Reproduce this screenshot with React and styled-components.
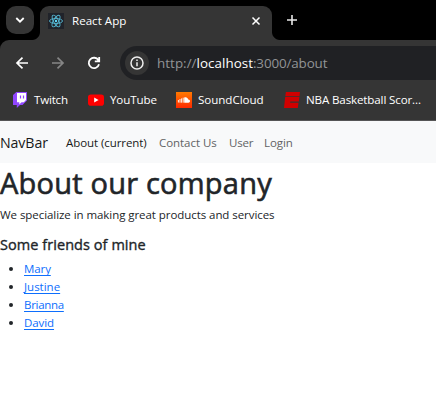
import React from "react";
import styled, { createGlobalStyle } from "styled-components";

const Global = createGlobalStyle`
  * { box-sizing: border-box; }
  body { margin: 0; background: #fff; overflow: hidden; font-family: "Open Sans", "Noto Sans", sans-serif; }
`;

const Window = styled.div`
  width: 436px;
  height: 411px;
  overflow: hidden;
  background: #fff;
  color: #212529;
`;

const Text = styled.span`
  white-space: nowrap;
  letter-spacing: ${(p) => p.$track || 0}px;
`;

const TabStrip = styled.div`
  display: flex;
  height: 40px;
  padding: 6px 0 0 6px;
  background: #000;
`;

const TabSearch = styled.div`
  display: grid;
  place-items: center;
  width: 28px;
  height: 28px;
  border-radius: 10px;
  background: #353535;
`;

const TabCurve = styled.div`
  width: 8px;
  height: 8px;
  align-self: flex-end;
  margin-left: ${(p) => (p.$right ? 0 : -2)}px;
  background: radial-gradient(circle at ${(p) => (p.$right ? "100%" : "0")} 0, transparent 7.5px, #353535 8.5px);
`;

const Tab = styled.div`
  display: flex;
  align-items: center;
  width: 232px;
  height: 34px;
  padding: 0 11px 5px 8px;
  border-radius: 9px 9px 0 0;
  background: #353535;
  color: #fff;
  font-size: 11.6px;
  line-height: 16px;
`;

const Favicon = styled.div`
  display: grid;
  width: 16px;
  height: 16px;
  margin-right: 8px;
  background: #20232a;
`;

const TabTitle = styled.div`
  flex: 1;
`;

const NewTab = styled.div`
  padding: 8px 0 0 6px;
  line-height: 0;
`;

const ToolbarBack = styled.div`
  background: #000;
`;

const Toolbar = styled.div`
  display: flex;
  align-items: center;
  height: 46px;
  padding-left: 14px;
  border-radius: 9px 0 0 0;
  background: #353535;
`;

const ToolButton = styled.div`
  display: grid;
  place-items: center;
  width: 16px;
  height: 16px;
  margin-right: 20px;

  &:nth-child(3) { margin-right: 18px; }
`;

const AddressBar = styled.div`
  display: flex;
  align-items: center;
  width: 340px;
  height: 34px;
  flex: none;
  padding-left: 5px;
  border-radius: 17px 0 0 17px;
  background: #202124;
`;

const SiteInfo = styled.div`
  display: grid;
  place-items: center;
  width: 24px;
  height: 24px;
  margin-right: 8px;
  border-radius: 50%;
  background: #353535;
`;

const Url = styled.div`
  display: flex;
  color: #929496;
  font-size: 13.4px;
  line-height: 20px;
  white-space: nowrap;
`;

const Host = styled(Text)`
  color: #fff;
`;

const Bookmarks = styled.div`
  display: flex;
  height: 35px;
  padding: 6px 0 0 12px;
  border-bottom: 1px solid #555;
  background: #353535;
  color: #fff;
`;

const Bookmark = styled.div`
  display: flex;
  align-items: center;
  flex: none;
  width: ${(p) => p.$width}px;
  height: 16px;
  font-size: 11.6px;
  line-height: 16px;

  svg { flex: none; margin-right: 6px; }
`;

const NavBar = styled.nav`
  display: flex;
  height: 42px;
  background: #f8f9fa;
  line-height: 20px;
`;

const Brand = styled.div`
  width: 66px;
  padding-top: 12px;
  color: #191919;
  font-size: 14.2px;
`;

const NavLink = styled.a`
  width: ${(p) => p.$width}px;
  padding-top: 12px;
  color: ${(p) => (p.$active ? "#191919" : "#626364")};
  font-size: 11.5px;
`;

const Title = styled.h1`
  height: 40px;
  margin: 0;
  font-size: 29px;
  font-weight: 400;
  line-height: 40px;
  -webkit-text-stroke: 0.6px currentColor;
`;

const Paragraph = styled.p`
  height: 18px;
  margin: 3px 0 12px;
  font-size: 11.5px;
  line-height: 18px;
`;

const Subtitle = styled.h5`
  height: 18px;
  margin: 0 0 6px;
  font-size: 14.5px;
  font-weight: 400;
  line-height: 18px;
  -webkit-text-stroke: 0.35px currentColor;
`;

const Friends = styled.ul`
  margin: 0;
  padding-left: 24px;
  font-size: 11.5px;
  line-height: 18px;
`;

const FriendLink = styled.a`
  color: #0d6efd;
  text-decoration: underline;
  text-decoration-thickness: 1px;
  text-underline-offset: 1.5px;
  text-decoration-skip-ink: none;
`;

const ReactIcon = () => (
  <svg width="16" height="16" viewBox="0 0 16 16" fill="none" stroke="#55b8d3" strokeWidth=".9">
    <circle cx="8" cy="8" r="1.2" fill="#61dafb" stroke="none" />
    {[0, 60, 120].map((a) => (
      <ellipse key={a} cx="8" cy="8" rx="6.5" ry="2.5" transform={`rotate(${a} 8 8)`} />
    ))}
  </svg>
);

const TwitchIcon = () => (
  <svg width="16" height="16" viewBox="0 0 16 16">
    <path d="M4.3 0 1 3v10h3.8v3L8 13h2.5L15 8.4V0z" fill="#9146ff" />
    <path d="M5 1h9v7l-2.2 2.3H9.5L7.3 12.4v-2.1H5z" fill="#fff" />
    <path d="M8.5 3.4v3.2M11.5 3.4v3.2" stroke="#9146ff" strokeWidth="1.2" />
  </svg>
);

const YouTubeIcon = () => (
  <svg width="16" height="16" viewBox="0 0 16 16">
    <rect x="0" y="2.4" width="16" height="11.3" rx="2.8" fill="#f00" />
    <path d="m6.2 5.6 4.4 2.4-4.4 2.4z" fill="#fff" />
  </svg>
);

const SoundCloudIcon = () => (
  <svg width="16" height="16" viewBox="0 0 16 16">
    <defs>
      <linearGradient id="sc" x1="0" y1="0" x2="0" y2="1">
        <stop offset="0" stopColor="#ff7a00" />
        <stop offset="1" stopColor="#ff2a00" />
      </linearGradient>
    </defs>
    <path d="M0 0h16v16H0z" fill="url(#sc)" />
    <path d="M2.4 8v2.5M4 7v3.7M5.6 6.4v4.3M7.2 5.7v5" stroke="#fff" strokeWidth=".9" />
    <path d="M8.2 5.4c2-.8 3.8.4 4 2.2 1-.2 1.8.6 1.8 1.5s-.7 1.6-1.6 1.6H8.2z" fill="#fff" />
  </svg>
);

const EspnIcon = () => (
  <svg width="16" height="16" viewBox="0 0 16 16" fill="#d00000">
    <path d="M1.9 0H16l-.5 4.2H1.3z" />
    <path d="M1.2 4.9h14.2l-.6 4.7H6.3l-.2 1.2h8.4L13.8 16H0z" />
  </svg>
);

const LINKS = [
  { label: "About (current)", width: 93, track: -0.07, active: true },
  { label: "Contact Us", width: 70, track: -0.05 },
  { label: "User", width: 35, track: -0.2 },
  { label: "Login", width: 40, track: -0.05 },
];

const MARKS = [
  { label: "Twitch", Icon: TwitchIcon, width: 76, track: -0.22 },
  { label: "YouTube", Icon: YouTubeIcon, width: 88, track: -0.12 },
  { label: "SoundCloud", Icon: SoundCloudIcon, width: 108, track: -0.05 },
  { label: "NBA Basketball Scor...", Icon: EspnIcon, width: 150, track: -0.14 },
];

const FRIENDS = [
  { name: "Mary", track: -0.1 },
  { name: "Justine", track: 0 },
  { name: "Brianna", track: -0.3 },
  { name: "David", track: -0.08 },
];

export default function App() {
  return (
    <Window>
      <Global />
      <TabStrip>
        <TabSearch>
          <svg width="10" height="8" viewBox="0 0 10 8" fill="none" stroke="#fff" strokeWidth="1.8">
            <path d="m1.3 2 3.7 3.7L8.7 2" />
          </svg>
        </TabSearch>
        <TabCurve />
        <Tab>
          <Favicon><ReactIcon /></Favicon>
          <TabTitle><Text>React App</Text></TabTitle>
          <svg width="10" height="10" viewBox="0 0 10 10" stroke="#fff" strokeWidth="1.5">
            <path d="m1.5 1.5 7 7m0-7-7 7" />
          </svg>
        </Tab>
        <TabCurve $right />
        <NewTab>
          <svg width="12" height="12" viewBox="0 0 12 12" stroke="#e8e8e8" strokeWidth="1.6">
            <path d="M6 1v10M1 6h10" />
          </svg>
        </NewTab>
      </TabStrip>
      <ToolbarBack>
        <Toolbar>
          <ToolButton>
            <svg width="16" height="16" viewBox="0 0 16 16" fill="none" stroke="#fff" strokeWidth="1.7">
              <path d="M14 8H3m5.5-5.4L3 8l5.5 5.4" />
            </svg>
          </ToolButton>
          <ToolButton>
            <svg width="16" height="16" viewBox="0 0 16 16" fill="none" stroke="#868686" strokeWidth="1.7">
              <path d="M2 8h11M7.5 2.6 13 8l-5.5 5.4" />
            </svg>
          </ToolButton>
          <ToolButton>
            <svg width="16" height="16" viewBox="0 0 16 16" fill="none" stroke="#fff" strokeWidth="1.8">
              <path d="M13 9.3A5.2 5.2 0 1 1 12.4 5.2M13.2 2v4.4H8.8" />
            </svg>
          </ToolButton>
          <AddressBar>
            <SiteInfo>
              <svg width="14" height="14" viewBox="0 0 14 14" fill="none" stroke="#eee" strokeWidth="1.5">
                <circle cx="7" cy="7" r="6" />
                <path d="M7 6.2v4M7 3.5v1.5" />
              </svg>
            </SiteInfo>
            <Url>
              <Text $track={0.04}>http://</Text>
              <Host $track={0.03}>localhost</Host>
              <Text $track={-0.12}>:3000/about</Text>
            </Url>
          </AddressBar>
        </Toolbar>
      </ToolbarBack>
      <Bookmarks>
        {MARKS.map(({ label, Icon, width, track }) => (
          <Bookmark key={label} $width={width}>
            <Icon />
            <Text $track={track}>{label}</Text>
          </Bookmark>
        ))}
      </Bookmarks>
      <NavBar>
        <Brand><Text $track={-0.1}>NavBar</Text></Brand>
        {LINKS.map(({ label, width, track, active }) => (
          <NavLink key={label} $width={width} $active={active}>
            <Text $track={track}>{label}</Text>
          </NavLink>
        ))}
      </NavBar>
      <Title><Text $track={0.22}>About our company</Text></Title>
      <Paragraph><Text $track={-0.06}>We specialize in making great products and services</Text></Paragraph>
      <Subtitle><Text $track={0.06}>Some friends of mine</Text></Subtitle>
      <Friends>
        {FRIENDS.map(({ name, track }) => (
          <li key={name}><FriendLink><Text $track={track}>{name}</Text></FriendLink></li>
        ))}
      </Friends>
    </Window>
  );
}
